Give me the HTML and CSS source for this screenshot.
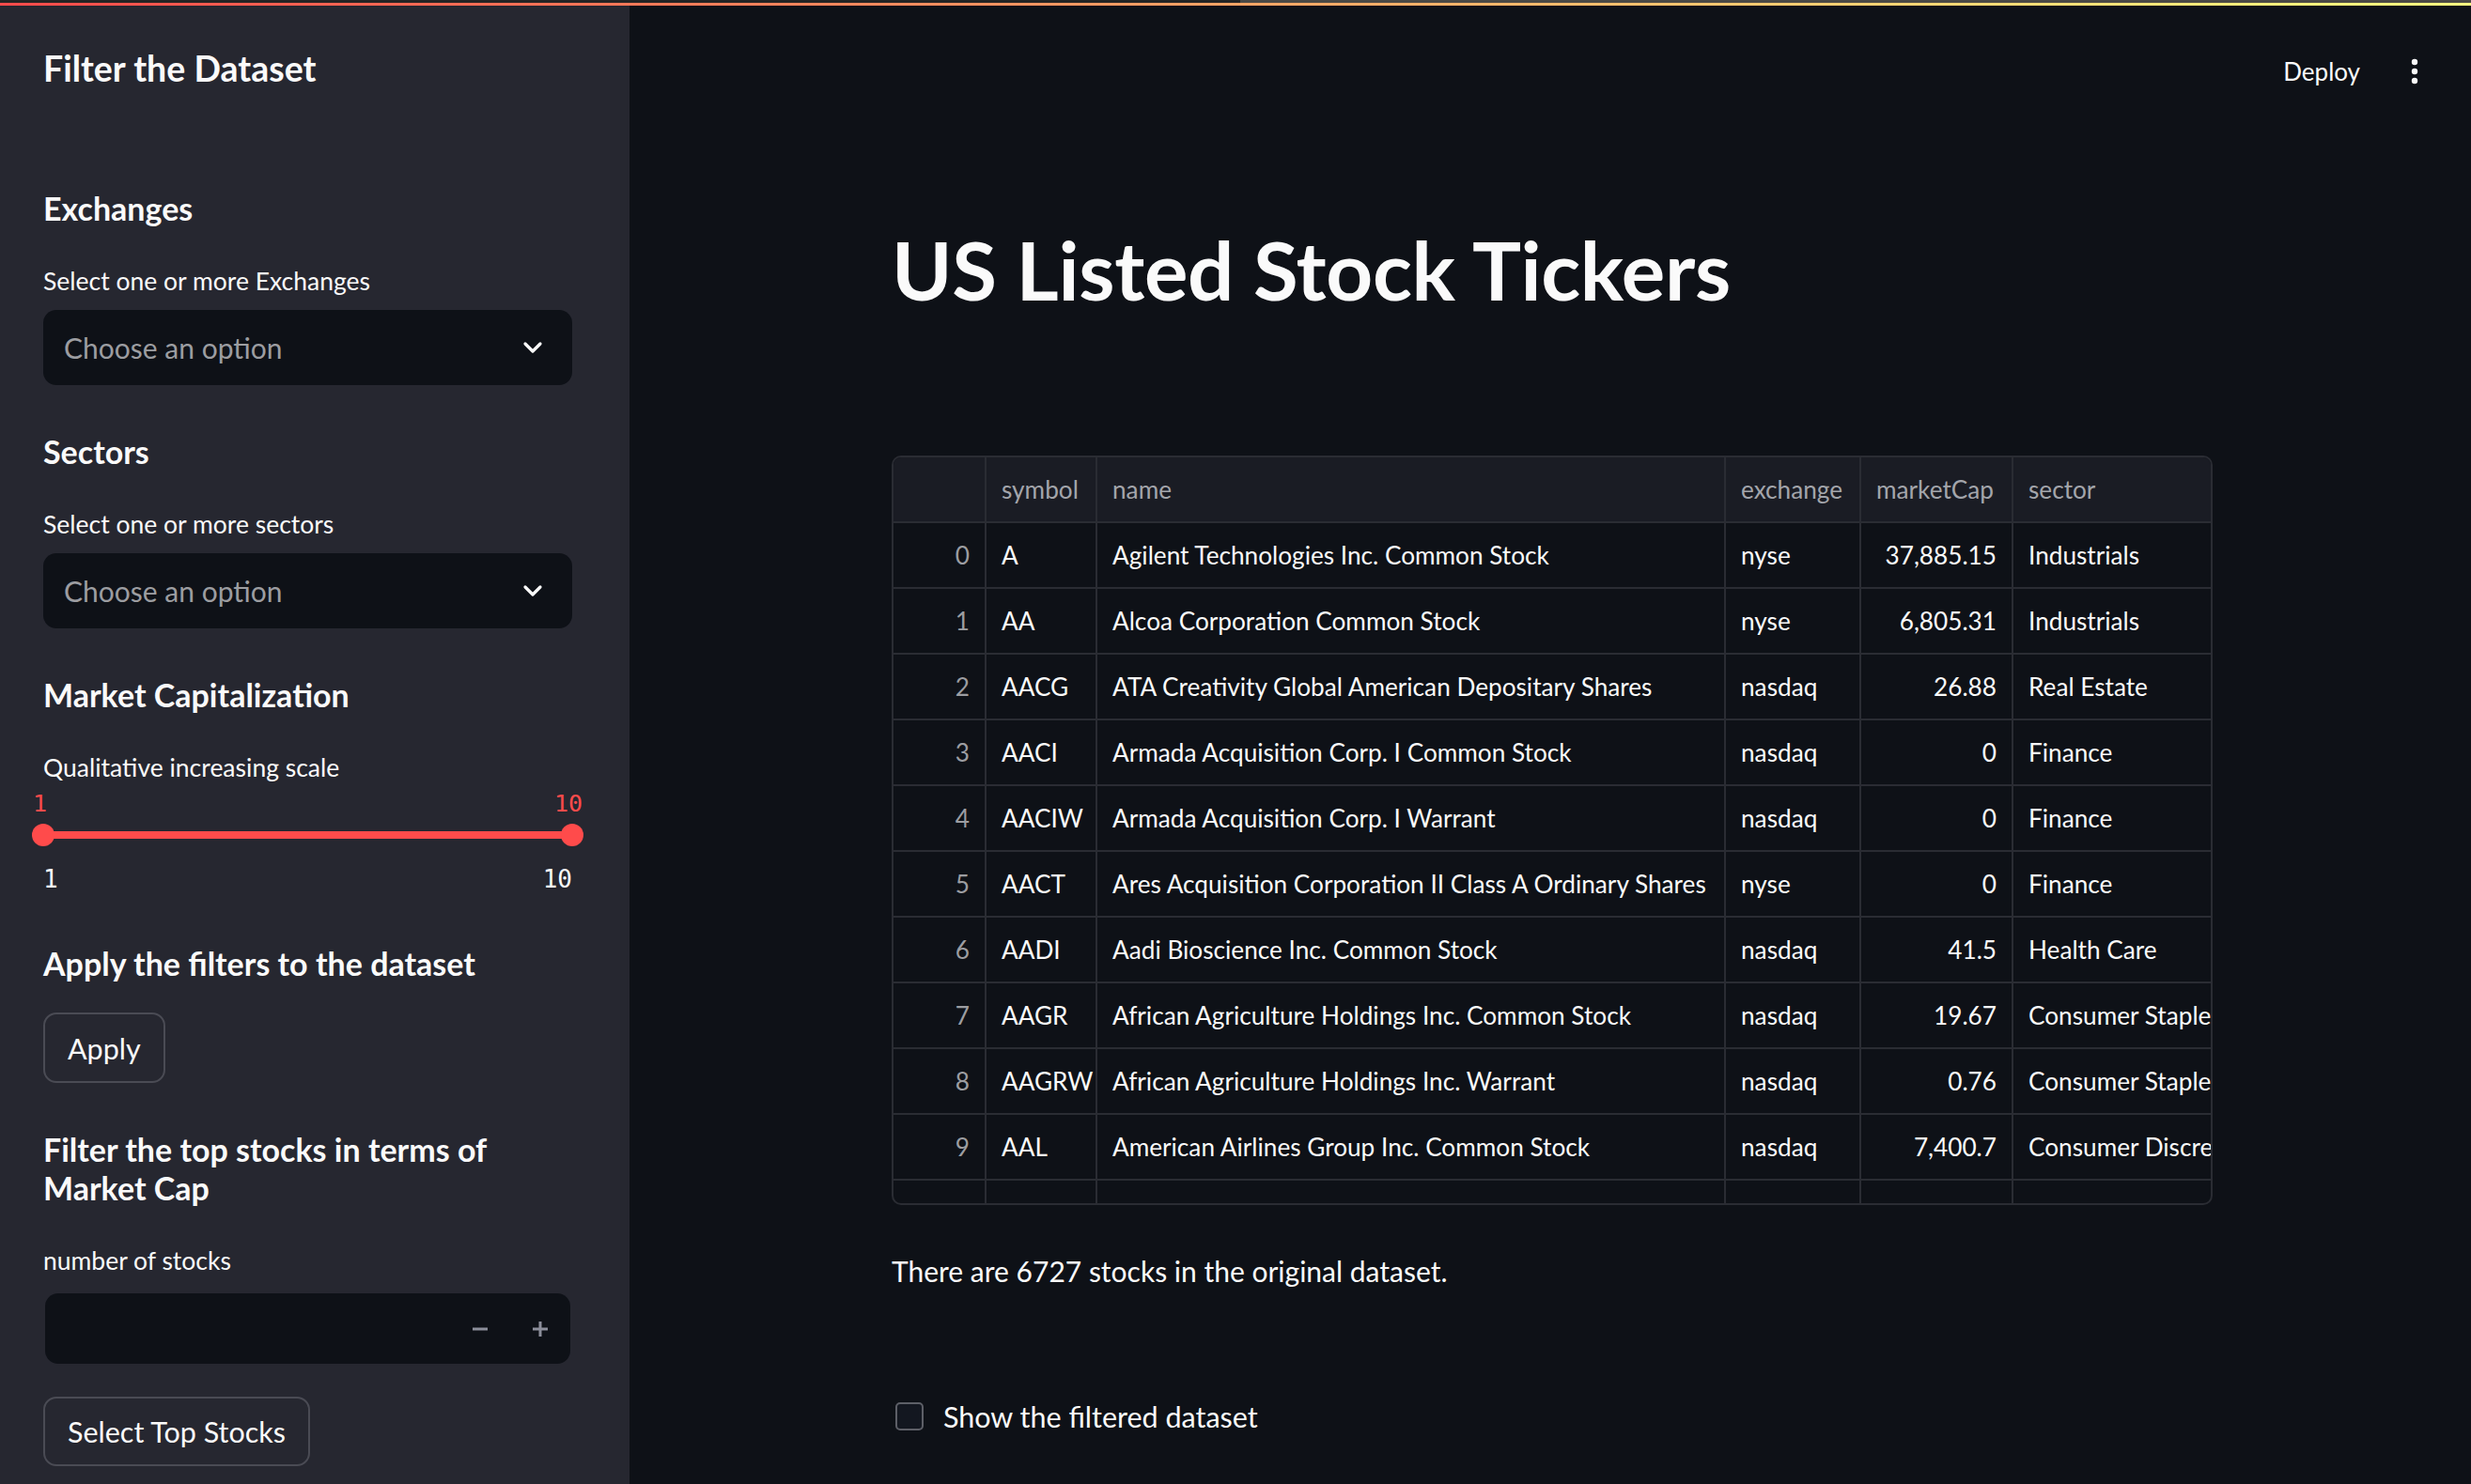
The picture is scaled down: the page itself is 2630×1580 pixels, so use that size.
FILE: index.html
```html
<!DOCTYPE html>
<html lang="en">
<head>
<meta charset="utf-8">
<title>US Listed Stock Tickers</title>
<link rel="stylesheet" href="styles.css">
</head>
<body>
<div class="chrome"><div class="chrome-left"></div><div class="chrome-right"></div></div>
<div class="decor"></div>
<div class="app">
  <aside class="sidebar">
    <h2 class="sb-title">Filter the Dataset</h2>

    <h3 class="sb-h sb-h-first">Exchanges</h3>
    <div class="sb-label">Select one or more Exchanges</div>
    <div class="select">
      <span class="placeholder">Choose an option</span>
      <svg class="chev" width="22" height="14" viewBox="0 0 22 14"><path d="M3 3 L11 11 L19 3" fill="none" stroke="#fafafa" stroke-width="3.2" stroke-linecap="round" stroke-linejoin="round"/></svg>
    </div>

    <h3 class="sb-h">Sectors</h3>
    <div class="sb-label">Select one or more sectors</div>
    <div class="select">
      <span class="placeholder">Choose an option</span>
      <svg class="chev" width="22" height="14" viewBox="0 0 22 14"><path d="M3 3 L11 11 L19 3" fill="none" stroke="#fafafa" stroke-width="3.2" stroke-linecap="round" stroke-linejoin="round"/></svg>
    </div>

    <h3 class="sb-h">Market Capitalization</h3>
    <div class="sb-label">Qualitative increasing scale</div>
    <div class="slider">
      <div class="slider-values"><span>1</span><span>10</span></div>
      <div class="track"><span class="thumb"></span><span class="track-line"></span><span class="thumb"></span></div>
      <div class="slider-ticks"><span>1</span><span>10</span></div>
    </div>

    <h3 class="sb-h sb-h-after-slider">Apply the filters to the dataset</h3>
    <button class="btn btn-apply">Apply</button>

    <h3 class="sb-h sb-h-two">Filter the top stocks in terms of<br>Market Cap</h3>
    <div class="sb-label">number of stocks</div>
    <div class="number-input">
      <span class="num-field"></span>
      <span class="step">
        <svg width="20" height="20" viewBox="0 0 20 20"><rect x="2" y="8.5" width="16" height="3" fill="#8b8e9a"/></svg>
      </span>
      <span class="step">
        <svg width="20" height="20" viewBox="0 0 20 20"><rect x="2" y="8.5" width="16" height="3" fill="#8b8e9a"/><rect x="8.5" y="2" width="3" height="16" fill="#8b8e9a"/></svg>
      </span>
    </div>
    <button class="btn btn-top">Select Top Stocks</button>
  </aside>

  <main class="main">
    <header class="topbar">
      <span class="deploy">Deploy</span>
      <svg class="kebab" width="12" height="28" viewBox="0 0 12 28"><circle cx="6" cy="4" r="3.2" fill="#fafafa"/><circle cx="6" cy="14" r="3.2" fill="#fafafa"/><circle cx="6" cy="24" r="3.2" fill="#fafafa"/></svg>
    </header>
    <div class="content">
      <h1 class="title">US Listed Stock Tickers</h1>

      <div class="grid-wrap">
        <div class="grid">
          <div class="cell head idx"></div>
          <div class="cell head">symbol</div>
          <div class="cell head">name</div>
          <div class="cell head">exchange</div>
          <div class="cell head">marketCap</div>
          <div class="cell head">sector</div>

          <div class="cell idx">0</div><div class="cell">A</div><div class="cell">Agilent Technologies Inc. Common Stock</div><div class="cell">nyse</div><div class="cell num">37,885.15</div><div class="cell">Industrials</div>
          <div class="cell idx">1</div><div class="cell">AA</div><div class="cell">Alcoa Corporation Common Stock</div><div class="cell">nyse</div><div class="cell num">6,805.31</div><div class="cell">Industrials</div>
          <div class="cell idx">2</div><div class="cell">AACG</div><div class="cell">ATA Creativity Global American Depositary Shares</div><div class="cell">nasdaq</div><div class="cell num">26.88</div><div class="cell">Real Estate</div>
          <div class="cell idx">3</div><div class="cell">AACI</div><div class="cell">Armada Acquisition Corp. I Common Stock</div><div class="cell">nasdaq</div><div class="cell num">0</div><div class="cell">Finance</div>
          <div class="cell idx">4</div><div class="cell">AACIW</div><div class="cell">Armada Acquisition Corp. I Warrant</div><div class="cell">nasdaq</div><div class="cell num">0</div><div class="cell">Finance</div>
          <div class="cell idx">5</div><div class="cell">AACT</div><div class="cell">Ares Acquisition Corporation II Class A Ordinary Shares</div><div class="cell">nyse</div><div class="cell num">0</div><div class="cell">Finance</div>
          <div class="cell idx">6</div><div class="cell">AADI</div><div class="cell">Aadi Bioscience Inc. Common Stock</div><div class="cell">nasdaq</div><div class="cell num">41.5</div><div class="cell">Health Care</div>
          <div class="cell idx">7</div><div class="cell">AAGR</div><div class="cell">African Agriculture Holdings Inc. Common Stock</div><div class="cell">nasdaq</div><div class="cell num">19.67</div><div class="cell">Consumer Staples</div>
          <div class="cell idx">8</div><div class="cell">AAGRW</div><div class="cell">African Agriculture Holdings Inc. Warrant</div><div class="cell">nasdaq</div><div class="cell num">0.76</div><div class="cell">Consumer Staples</div>
          <div class="cell idx">9</div><div class="cell">AAL</div><div class="cell">American Airlines Group Inc. Common Stock</div><div class="cell">nasdaq</div><div class="cell num">7,400.7</div><div class="cell">Consumer Discretionary</div>
          <div class="cell idx">10</div><div class="cell">AAME</div><div class="cell">Atlantic American Corporation Common Stock</div><div class="cell">nasdaq</div><div class="cell num">38.43</div><div class="cell">Finance</div>
        </div>
      </div>

      <p class="caption">There are 6727 stocks in the original dataset.</p>

      <label class="check"><span class="box"></span><span class="check-text">Show the filtered dataset</span></label>
    </div>
  </main>
</div>
</body>
</html>
```

FILE: styles.css
```css
* { box-sizing: border-box; }

html, body {
  margin: 0;
  padding: 0;
}

body {
  width: 2630px;
  height: 1580px;
  overflow: hidden;
  background: #0e1117;
  color: #fafafa;
  font-family: "Lato", "Liberation Sans", sans-serif;
}

.chrome {
  display: flex;
  height: 3px;
}
.chrome-left { width: 1320px; background: #242424; }
.chrome-right { flex: 1; background: #4b4945; }

.decor {
  height: 3px;
  background: linear-gradient(90deg, #ff4b4b, #fffd80);
}

.app {
  display: flex;
  height: 1574px;
}

/* ---------- Sidebar ---------- */
.sidebar {
  width: 670px;
  flex: none;
  background: #262730;
  padding: 42px 61px 0 46px;
  display: flex;
  flex-direction: column;
  align-items: stretch;
}

.sb-title {
  margin: 0;
  font-size: 37.5px;
  font-weight: 700;
  line-height: 50px;
  height: 50px;
}

.sb-h {
  margin: 51px 0 0 0;
  font-size: 34px;
  font-weight: 700;
  line-height: 40px;
}
.sb-h-first { margin-top: 104px; }
.sb-h-after-slider { margin-top: 55px; }
.sb-h-two { margin-top: 50px; line-height: 41px; }

.sb-label {
  margin-top: 41px;
  font-size: 26.5px;
  line-height: 32px;
  height: 32px;
}

.select {
  margin-top: 15px;
  height: 80px;
  border-radius: 14px;
  background: #0e1117;
  display: flex;
  align-items: center;
  justify-content: space-between;
  padding: 0 31px 0 22px;
}
.placeholder {
  font-size: 30px;
  color: #9c9da1;
}
.chev { display: block; }

/* slider */
.slider {
  display: flex;
  flex-direction: column;
}
.slider-values {
  margin: 8px -11px 0 -11px;
  display: flex;
  justify-content: space-between;
  font-family: "DejaVu Sans Mono", "Liberation Mono", monospace;
  font-size: 25px;
  line-height: 30px;
  color: #ff4b4b;
}
.track {
  margin: 6px -12px 0 -12px;
  height: 24px;
  display: flex;
  align-items: center;
}
.thumb {
  width: 24px;
  height: 24px;
  border-radius: 50%;
  background: #ff4b4b;
  flex: none;
}
.track-line {
  flex: 1;
  height: 8px;
  background: #ff4b4b;
  margin: 0 -2px;
}
.slider-ticks {
  margin-top: 20px;
  display: flex;
  justify-content: space-between;
  font-family: "DejaVu Sans Mono", "Liberation Mono", monospace;
  font-size: 26px;
  line-height: 30px;
  color: #fafafa;
}

/* buttons */
.btn {
  align-self: flex-start;
  font-family: inherit;
  font-size: 30.5px;
  color: #fafafa;
  background: #262730;
  border: 2px solid #4a4b54;
  border-radius: 14px;
  padding: 0 24px;
  cursor: pointer;
}
.btn-apply {
  margin-top: 32px;
  height: 75px;
}
.btn-top {
  margin-top: 35px;
  height: 74px;
}

.number-input {
  margin: 19px 2px 0 2px;
  height: 75px;
  border-radius: 14px;
  background: #0e1117;
  display: flex;
  align-items: center;
}
.num-field { flex: 1; }
.step {
  width: 64px;
  height: 100%;
  display: flex;
  align-items: center;
  justify-content: center;
}

/* ---------- Main ---------- */
.main {
  flex: 1;
  display: flex;
  flex-direction: column;
  min-width: 0;
}

.topbar {
  height: 139px;
  flex: none;
  display: flex;
  justify-content: flex-end;
  align-items: center;
  padding-right: 54px;
  gap: 52px;
}
.deploy {
  font-size: 26px;
  color: #fafafa;
}
.kebab { display: block; }

.content {
  padding-left: 279px;
  width: 1687px;
  display: flex;
  flex-direction: column;
}

.title {
  margin: 92px 0 0 0;
  font-size: 87px;
  font-weight: 700;
  line-height: 100px;
  height: 100px;
  letter-spacing: -0.3px;
}

.grid-wrap {
  margin-top: 148px;
  width: 1406px;
  height: 798px;
  border: 2px solid #2a2c33;
  border-radius: 10px;
  overflow: hidden;
  background: #0e1117;
}

.grid {
  display: grid;
  grid-template-columns: 99px 118px 669px 144px 162px 260px;
  grid-auto-rows: 70px;
  width: 1452px;
}

.cell {
  border-right: 2px solid #2a2c33;
  border-bottom: 2px solid #2a2c33;
  padding: 0 16px;
  display: flex;
  align-items: center;
  font-size: 26.2px;
  color: #fafafa;
  white-space: nowrap;
  overflow: hidden;
}
.cell.head {
  background: #1a1c24;
  color: #a3a5ab;
}
.cell.idx {
  justify-content: flex-end;
  color: #9c9da1;
}
.cell.num {
  justify-content: flex-end;
}

.caption {
  margin: 50px 0 0 0;
  font-size: 30px;
  line-height: 40px;
}

.check {
  margin-top: 115px;
  height: 40px;
  display: flex;
  align-items: center;
  font-size: 30.5px;
}
.box {
  width: 30px;
  height: 30px;
  margin-left: 4px;
  margin-right: 21px;
  border: 2px solid #5d5f67;
  border-radius: 5px;
  background: #131720;
  flex: none;
}
```
